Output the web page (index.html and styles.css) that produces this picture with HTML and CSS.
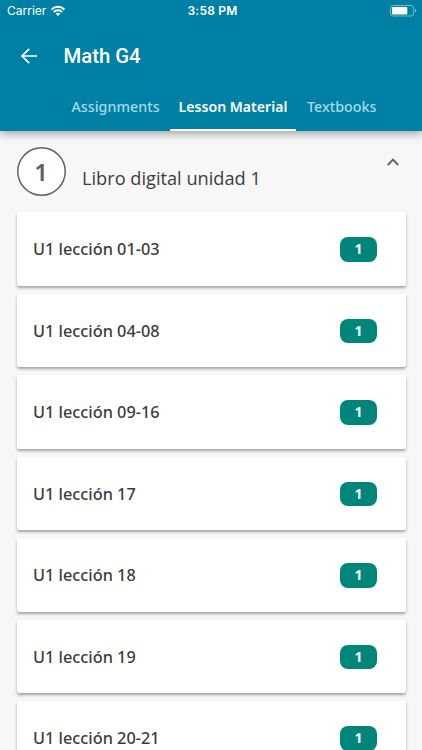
FILE: index.html
```html
<!DOCTYPE html>
<html lang="es">
<head>
  <meta charset="UTF-8" />
  <meta name="viewport" content="width=device-width, initial-scale=1.0"/>
  <title>Math G4</title>
  <link rel="stylesheet" href="styles.css">
</head>
<body>

  <header class="header">
    <!-- Status bar -->
    <div class="status-bar">
      <div class="carrier">
        <span>Carrier</span>
        <svg class="wifi" viewBox="0 0 16 12" fill="none" stroke="#fff" stroke-width="2">
          <path d="M1.6 4.4a9.3 9.3 0 0 1 12.8 0M3.8 7a6.1 6.1 0 0 1 8.4 0"/>
          <path d="M8 11 5.7 8.8a3.3 3.3 0 0 1 4.6 0z" fill="#fff" stroke="none"/>
        </svg>
      </div>
      <span class="time">3:58 PM</span>
      <svg class="battery" viewBox="0 0 27 12">
        <rect x=".5" y=".5" width="23.2" height="10.5" rx="2.6" fill="none" stroke="#fff" stroke-opacity=".45"/>
        <rect x="2" y="2" width="15.3" height="7.5" rx="1" fill="#fff"/>
        <path d="M25 4v3.6c1.8-.6 1.8-3 0-3.6z" fill="#fff" fill-opacity=".5"/>
      </svg>
    </div>

    <div class="title-bar">
      <svg class="back" viewBox="0 0 18 18" fill="none" stroke="#fff" stroke-width="1.7">
        <path d="M17 9H2.2M9.2 1.8 2 9l7.2 7.2"/>
      </svg>
      <h1>Math G4</h1>
    </div>

    <nav class="tabs">
      <a class="tab">Assignments</a>
      <a class="tab active">Lesson Material</a>
      <a class="tab">Textbooks</a>
    </nav>
  </header>

  <main class="content">
    <div class="unit">
      <span class="unit-number">1</span>
      <h2>Libro digital unidad 1</h2>
      <svg class="chevron" viewBox="0 0 12 8" fill="none" stroke="#616161" stroke-width="1.9">
        <path d="M.8 7 6 1.7 11.2 7"/>
      </svg>
    </div>

    <!-- Lessons -->
    <ul class="lessons">
      <li class="lesson"><span>U1 lección 01-03</span><span class="badge">1</span></li>
      <li class="lesson"><span>U1 lección 04-08</span><span class="badge">1</span></li>
      <li class="lesson"><span>U1 lección 09-16</span><span class="badge">1</span></li>
      <li class="lesson"><span>U1 lección 17</span><span class="badge">1</span></li>
      <li class="lesson"><span>U1 lección 18</span><span class="badge">1</span></li>
      <li class="lesson"><span>U1 lección 19</span><span class="badge">1</span></li>
      <li class="lesson"><span>U1 lección 20-21</span><span class="badge">1</span></li>
    </ul>
  </main>

</body>
</html>
```
FILE: styles.css
```css
/* Reset & base */
* { box-sizing: border-box; margin: 0; padding: 0; }
body {
  height: 100vh;
  overflow: hidden;
  display: flex;
  flex-direction: column;
  font-family: 'Noto Sans', 'Open Sans', sans-serif;
  background: #f7f7f7;
  color: #3c3c3c;
}

/* Header */
.header {
  flex: 0 0 130.5px;
  display: flex;
  flex-direction: column;
  background: #0080a4;
  color: #fff;
  box-shadow: 0 2px 9px rgba(0,0,0,0.4);
}
.status-bar {
  height: 21px;
  display: grid;
  grid-template-columns: 1fr auto 1fr;
  align-items: center;
  padding: 0 5px 0 7px;
  font-family: Inter, sans-serif;
  font-size: 12px;
}
.carrier { display: flex; align-items: center; gap: 4px; }
.wifi { width: 16px; height: 12px; }
.time { font-weight: 600; letter-spacing: 0.2px; padding-left: 1px; }
.battery { width: 27px; height: 12px; justify-self: end; }

.title-bar {
  height: 70px;
  display: flex;
  align-items: center;
  padding-left: 20px;
  gap: 25.5px;
}
.back { width: 18px; height: 18px; }
.title-bar h1 {
  font-family: Roboto, sans-serif;
  font-size: 20.3px;
  font-weight: 500;
}

/* Tabs */
.tabs {
  flex: 1;
  display: flex;
  padding-left: 62px;
}
.tab {
  padding: 6px 10px 0 9.5px;
  font-size: 14.3px;
  font-weight: 500;
  line-height: 20px;
  color: #a5d9e9;
  white-space: nowrap;
}
.tab.active {
  color: #fff;
  font-size: 14.1px;
  font-weight: 600;
  padding: 6px 9px 0;
  border-bottom: 2px solid #fff;
}
.tab:last-child { padding-left: 10.5px; }

/* Unit heading */
.content { padding: 16.5px 16.5px 0; }
.unit {
  height: 65.3px;
  display: flex;
  align-items: flex-start;
}
.unit-number {
  width: 49px;
  height: 49px;
  border-radius: 50%;
  background: #fff;
  box-shadow: inset 0 0 0 1.5px #616161;
  color: #616161;
  font-size: 24px;
  font-weight: 600;
  line-height: 49px;
  text-align: center;
}
.unit h2 {
  flex: 1;
  margin: 17px 0 0 16.5px;
  font-family: 'Open Sans', sans-serif;
  font-size: 18.2px;
  font-weight: 400;
  line-height: 28px;
}
.chevron { width: 12px; height: 8px; margin: 11px 6.5px 0 0; }

/* Lesson cards */
.lessons {
  list-style: none;
  display: flex;
  flex-direction: column;
  gap: 8px;
}
.lesson {
  height: 73.5px;
  display: flex;
  align-items: center;
  justify-content: space-between;
  padding: 0.6px 28.5px 0 16.5px;
  border-radius: 2px;
  background: #fff;
  box-shadow: 0 2px 3px rgba(0,0,0,0.34);
  font-size: 16.3px;
  font-weight: 500;
}
.badge {
  width: 37px;
  height: 24.5px;
  border-radius: 8px;
  background: #00857b;
  color: #fff;
  font-size: 14px;
  font-weight: 700;
  line-height: 24px;
  text-align: center;
}
```
